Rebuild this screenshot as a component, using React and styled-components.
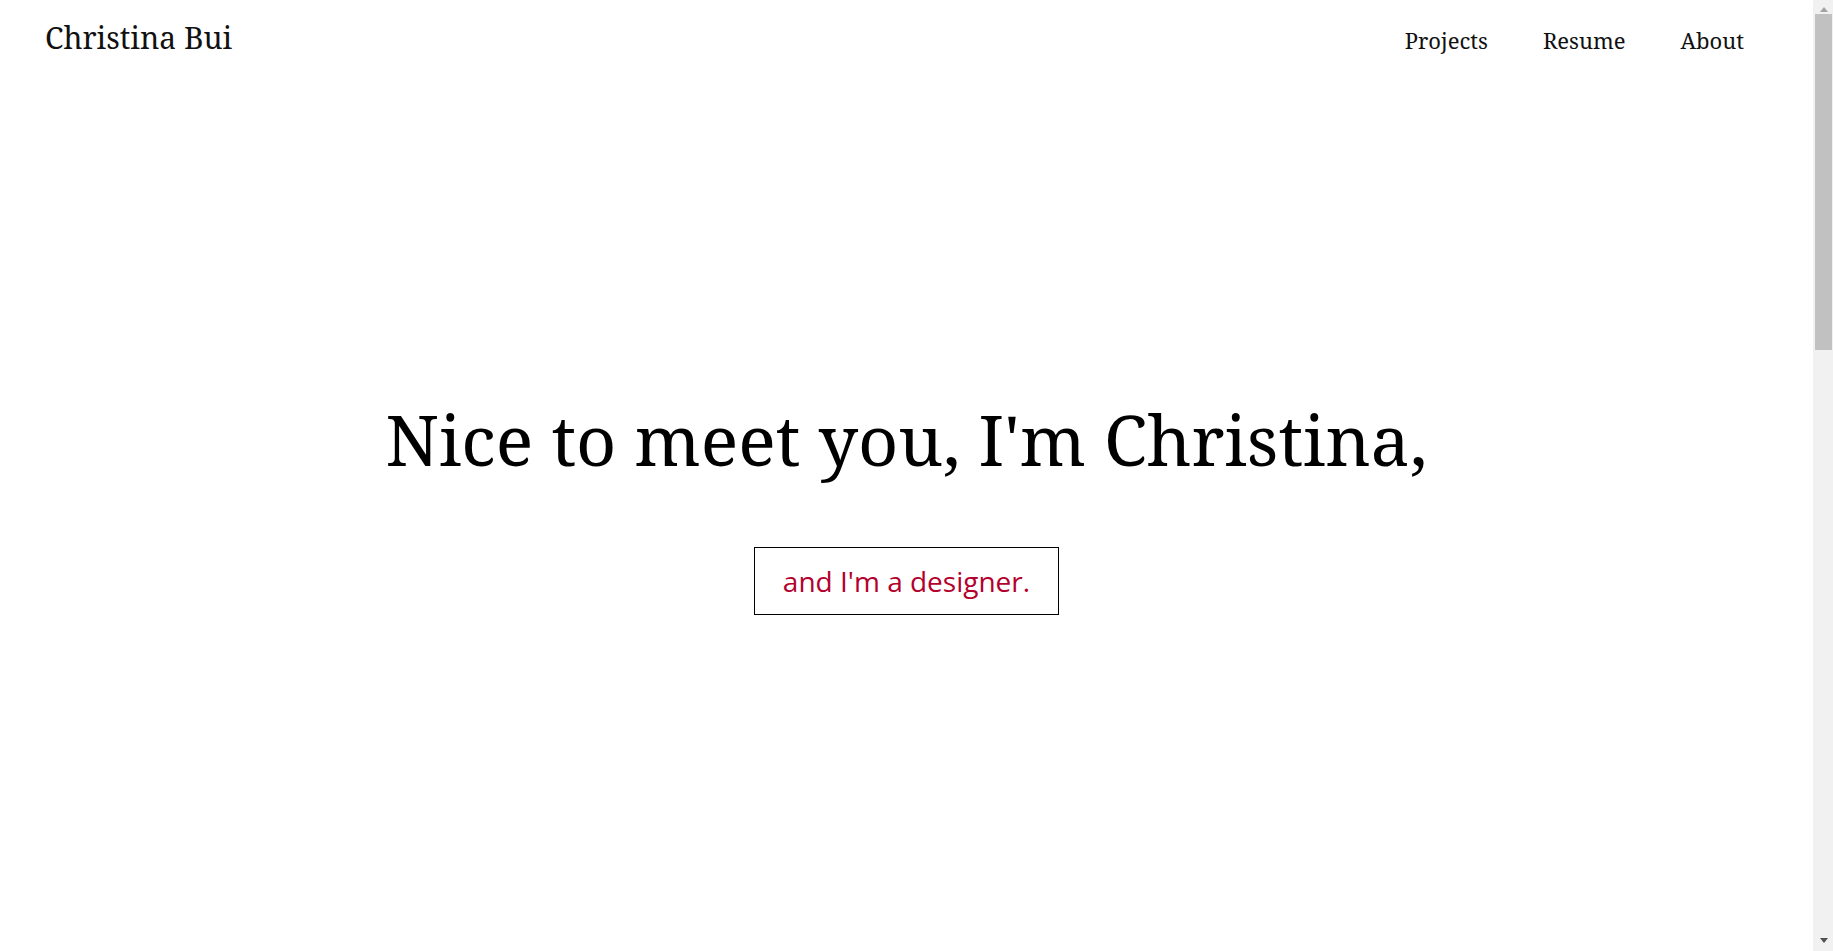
import React from 'react';
import styled, { createGlobalStyle } from 'styled-components';

const GlobalStyle = createGlobalStyle`
  html, body {
    margin: 0;
    padding: 0;
    background: #ffffff;
  }
  body {
    font-family: "Noto Serif", "DejaVu Serif", serif;
    color: #111111;
  }
`;

export default function App() {
  return (
    <>
      <GlobalStyle />
      <Page>
        <Header>
          <Brand>Christina Bui</Brand>
          <Nav>
            <NavLink href="#projects">Projects</NavLink>
            <NavLink href="#resume">Resume</NavLink>
            <NavLink href="#about">About</NavLink>
          </Nav>
        </Header>

        <Hero>
          <Headline>Nice to meet you, I'm Christina,</Headline>
          <Tagline>and I'm a designer.</Tagline>
        </Hero>

        <Projects id="projects" />
      </Page>

      <ScrollRail>
        <Arrow direction="up" />
        <Thumb />
        <Arrow direction="down" />
      </ScrollRail>
    </>
  );
}

const Page = styled.div`
  box-sizing: border-box;
  width: 100%;
  padding-right: 20px;
`;

const Header = styled.header`
  display: flex;
  justify-content: space-between;
  align-items: baseline;
  padding: 18px 69px 0 45px;
`;

const Brand = styled.div`
  font-size: 30px;
  line-height: 40px;
  color: #111111;
`;

const Nav = styled.nav`
  display: flex;
  align-items: baseline;
  gap: 55px;
`;

const NavLink = styled.a`
  font-size: 22px;
  line-height: 30px;
  color: #111111;
  text-decoration: none;
  cursor: pointer;
`;

const Hero = styled.section`
  display: flex;
  flex-direction: column;
  align-items: center;
  padding-top: 334px;
  text-align: center;
`;

const Headline = styled.h1`
  margin: 0;
  font-size: 70px;
  font-weight: 400;
  line-height: 95px;
  color: #000000;
`;

const Tagline = styled.div`
  margin-top: 60px;
  padding: 14px 28px;
  border: 1px solid #000000;
  font-family: "Open Sans", sans-serif;
  font-size: 28px;
  line-height: 38px;
  color: #b3002d;
`;

const Projects = styled.section`
  height: 1990px;
`;

/* browser scrollbar, as it shows in the screenshot */
const ScrollRail = styled.div`
  position: fixed;
  top: 0;
  right: 0;
  bottom: 0;
  width: 20px;
  display: flex;
  flex-direction: column;
  align-items: center;
  background: #f1f1f1;
`;

const Thumb = styled.div`
  width: 17px;
  height: 336px;
  margin: 2px 0 0 1px;
  background: #c1c1c1;
`;

const Arrow = styled.div`
  width: 0;
  height: 0;
  border-left: 4.5px solid transparent;
  border-right: 4.5px solid transparent;
  ${({ direction }) =>
    direction === 'up'
      ? `
    margin-top: 7px;
    margin-left: 1px;
    border-bottom: 5px solid #a3a3a3;
  `
      : `
    margin-top: auto;
    margin-bottom: 8px;
    margin-left: 1px;
    border-top: 5px solid #505050;
  `}
`;
